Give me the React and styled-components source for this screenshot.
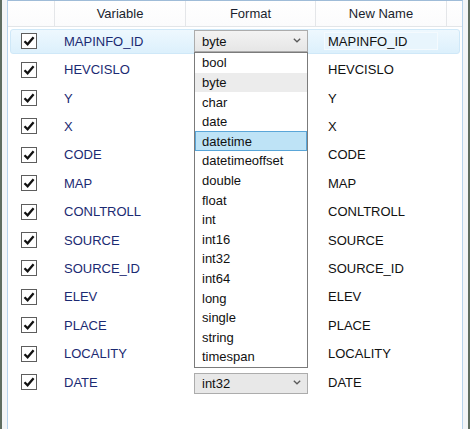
import React from 'react'
import styled, { createGlobalStyle } from 'styled-components'

const GlobalStyle = createGlobalStyle`
  html, body {
    margin: 0;
    padding: 0;
    background: #ffffff;
  }
  body {
    font-family: "Liberation Sans", Arial, sans-serif;
    font-size: 13px;
  }
`

const rows = [
  'MAPINFO_ID', 'HEVCISLO', 'Y', 'X', 'CODE', 'MAP', 'CONLTROLL',
  'SOURCE', 'SOURCE_ID', 'ELEV', 'PLACE', 'LOCALITY', 'DATE',
]

const formats = [
  'bool', 'byte', 'char', 'date', 'datetime', 'datetimeoffset', 'double',
  'float', 'int', 'int16', 'int32', 'int64', 'long', 'single', 'string', 'timespan',
]

const COLS = '47px 131px 130px 131px 1fr'

const App = () => {
  return (
    <>
      <GlobalStyle />
      <Window>
        <EdgeBar />
        <Gutter />
        <Panel>
          <Header>
            <HeadCell />
            <HeadCell>Variable</HeadCell>
            <HeadCell>Format</HeadCell>
            <HeadCell>New Name</HeadCell>
            <HeadCell $last />
          </Header>
          <Body>
            {rows.map((name, i) => (
              <Row key={name} $selected={i === 0}>
                <CheckCell>
                  <CheckBox>
                    <svg width="12" height="12" viewBox="0 0 12 12">
                      <path d="M1.5 6.2 L4.6 9.3 L10.6 2.2" fill="none" stroke="#111" strokeWidth="2.3" strokeLinejoin="miter" />
                    </svg>
                  </CheckBox>
                </CheckCell>
                <VarCell>{name}</VarCell>
                <FormatCell>
                  {i === 0 && <Combo>byte<Chevron /></Combo>}
                  {i === rows.length - 1 && <Combo $flat>int32<Chevron /></Combo>}
                </FormatCell>
                <NameCell>
                  {i === 0 ? <NameEdit>{name}</NameEdit> : name}
                </NameCell>
                <div />
              </Row>
            ))}
            <DropList>
              {formats.map((f) => (
                <DropItem key={f} $hover={f === 'byte'} $active={f === 'datetime'}>
                  {f}
                </DropItem>
              ))}
            </DropList>
          </Body>
        </Panel>
        <Gutter />
        <EdgeBar />
      </Window>
    </>
  )
}

const Chevron = () => (
  <ChevronBox>
    <svg width="8" height="5" viewBox="0 0 8 5">
      <path d="M0.8 0.8 L4 3.8 L7.2 0.8" fill="none" stroke="#5a5a5a" strokeWidth="1.3" />
    </svg>
  </ChevronBox>
)

export default App

const Window = styled.div`
    display: flex;
    width: 470px;
    height: 429px;
    overflow: hidden;
`

const EdgeBar = styled.div`
    width: 2px;
    flex: none;
    background: #5f6d60;
`

const Gutter = styled.div`
    width: 5px;
    flex: none;
    background: #f3f5f7;
`

const Panel = styled.div`
    flex: 1;
    display: flex;
    flex-direction: column;
    background: #ffffff;
    border-left: 1px solid #b7d3ec;
    border-right: 1px solid #b7d3ec;
    border-top: 1px solid #9fbcd8;
`

const Header = styled.div`
    display: grid;
    grid-template-columns: ${COLS};
    height: 25px;
    border-bottom: 1px solid #e2e5e8;
    background: linear-gradient(#ffffff, #fbfbfc);
`

const HeadCell = styled.div`
    display: flex;
    align-items: center;
    justify-content: center;
    color: #1a1f2e;
    border-right: ${(p) => (p.$last ? 'none' : '1px solid #e4e6e9')};
`

const Body = styled.div`
    position: relative;
    flex: 1;
`

const Row = styled.div`
    position: relative;
    display: grid;
    grid-template-columns: ${COLS};
    height: 28.42px;
    align-items: center;

    &::before {
        content: '';
        display: ${(p) => (p.$selected ? 'block' : 'none')};
        position: absolute;
        top: 2px;
        bottom: 1px;
        left: 2px;
        right: 2px;
        border: 1px solid #cfe8f8;
        border-radius: 3px;
        background: linear-gradient(#eef8fe, #dcf0fc);
    }

    & > * {
        position: relative;
    }
`

const CheckCell = styled.div`
    display: flex;
    align-items: center;
    padding-left: 13px;
`

const CheckBox = styled.div`
    width: 14px;
    height: 14px;
    border: 1px solid #5d5d5d;
    background: #ffffff;
    display: flex;
    align-items: center;
    justify-content: center;
`

const VarCell = styled.div`
    padding-left: 9px;
    color: #1b2a72;
    white-space: nowrap;
`

const FormatCell = styled.div`
    display: flex;
    align-items: center;
    padding-left: 8px;
`

const Combo = styled.div`
    box-sizing: border-box;
    width: 114px;
    height: ${(p) => (p.$flat ? '21px' : '22px')};
    margin-top: ${(p) => (p.$flat ? '2px' : '0')};
    display: flex;
    align-items: center;
    justify-content: space-between;
    padding: 0 6px 0 7px;
    border: 1px solid #acacac;
    background: ${(p) => (p.$flat ? '#e8e8e8' : 'linear-gradient(#f3f3f3, #e6e6e6)')};
    color: #111;
`

const ChevronBox = styled.span`
    display: flex;
    align-items: center;
    padding-bottom: 2px;
`

const NameCell = styled.div`
    display: flex;
    align-items: center;
    padding-left: 12px;
    color: #111;
    white-space: nowrap;
`

const NameEdit = styled.div`
    box-sizing: border-box;
    width: 114px;
    height: 18px;
    margin-left: -4px;
    padding-left: 3px;
    display: flex;
    align-items: center;
    border: 1px solid #f4fafe;
    background: #e8f5fd;
`

const DropList = styled.div`
    position: absolute;
    top: 25px;
    left: 186px;
    width: 114px;
    box-sizing: border-box;
    border: 1px solid #7b7b7b;
    background: #ffffff;
    z-index: 2;
`

const DropItem = styled.div`
    box-sizing: border-box;
    height: 19.62px;
    display: flex;
    align-items: center;
    padding-left: 6px;
    color: #111;
    white-space: nowrap;
    background: ${(p) => (p.$active ? '#bee3f6' : p.$hover ? '#ececec' : 'transparent')};
    border: 1px solid ${(p) => (p.$active ? '#5aa6d8' : 'transparent')};
`
